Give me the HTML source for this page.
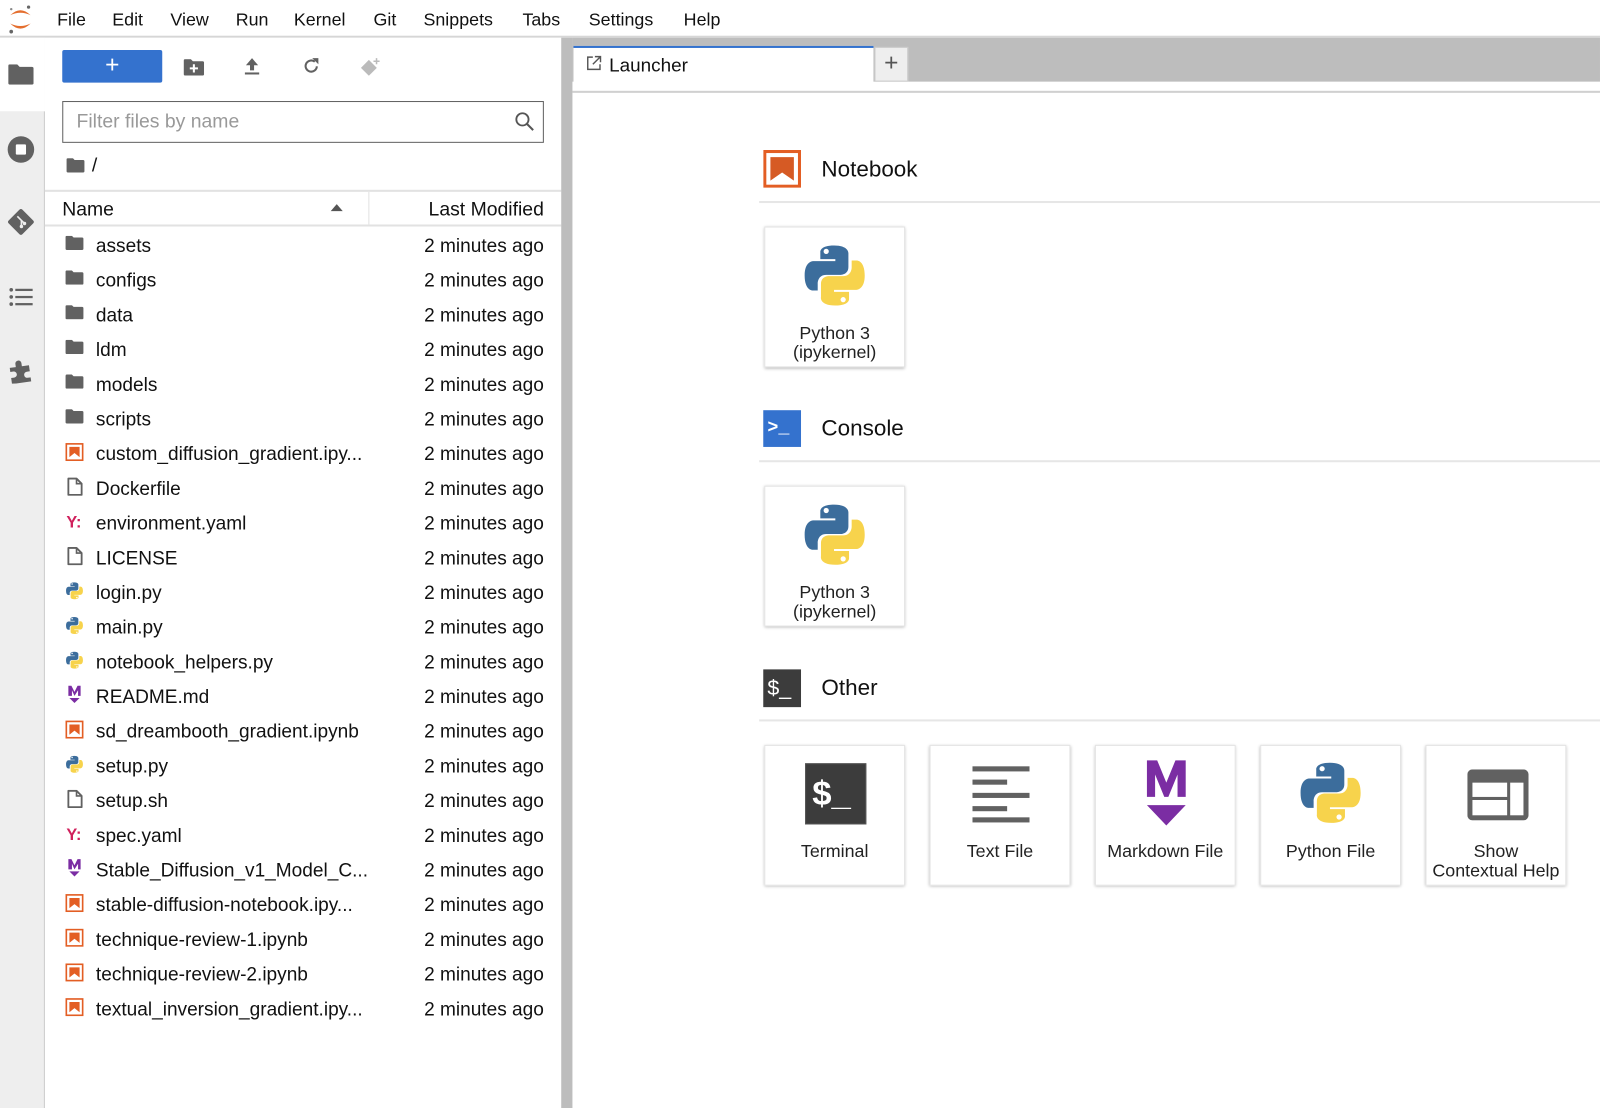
<!DOCTYPE html>
<html><head><meta charset="utf-8">
<style>
*{box-sizing:border-box;margin:0;padding:0}
body{width:1600px;height:1108px;overflow:hidden;background:#fff;font-family:"Liberation Sans",sans-serif;color:#111;position:relative}
#w{position:absolute;left:0;top:0;width:1568px;height:1086px;transform:scale(1.0204);transform-origin:0 0;overflow:hidden}
.abs{position:absolute}
.menu{left:0;top:0;width:1600px;height:37px;border-bottom:2px solid #d6d6d6;background:#fff}
.menu span{position:absolute;top:9px;font-size:17.5px;color:#111}
.side{left:0;top:37px;width:44px;height:1071px;background:#eeeeee;border-right:1px solid #c8c8c8}
.panel{left:44px;top:37px;width:506px;height:1071px;background:#fff}
.split{left:550px;top:37px;width:11px;height:1071px;background:#bdbdbd}
.row{position:absolute;left:44px;width:506px;height:34px;font-size:18.7px}
.row .n{position:absolute;left:50px;top:8px;color:#111;white-space:nowrap}
.row .d{position:absolute;right:17px;top:8px;color:#111}
.row svg{position:absolute;left:20px;top:9px}
.card{position:absolute;width:138px;height:138px;background:#fff;box-shadow:0 1px 3px rgba(0,0,0,.3);border:1px solid #e4e4e4;text-align:center;font-size:17.5px;color:#222;line-height:19px}
.card .lbl{position:absolute;left:0;right:0}
.sec{position:absolute;left:805px;font-size:22px;color:#111}
.hr{position:absolute;left:744px;width:856px;height:2px;background:#e6e6e6}
</style></head><body>
<svg width="0" height="0" style="position:absolute">
<defs>
<symbol id="py" viewBox="0 0 100 100">
<path fill="#3c6d9c" d="M49 4C27 4 28 14 28 14v11h23v3H18S4 27 4 50s12 23 12 23h8V62s0-13 13-13h22s12 0 12-12V16S72 4 49 4z"/>
<circle cx="37" cy="13" r="4" fill="#fff"/>
<path fill="#f7d34c" d="M51 96c22 0 21-10 21-10V75H49v-3h33s14 1 14-22-12-23-12-23h-8v11s0 13-13 13H41s-12 0-12 12v20s-3 13 22 13z"/>
<circle cx="63" cy="87" r="4" fill="#fff"/>
</symbol>
<symbol id="nb" viewBox="0 0 18 18"><rect x="1" y="1" width="16" height="16" fill="#fff" stroke="#e35e24" stroke-width="1.6"/><path d="M4 4h10v10l-5-4-5 4z" fill="#e35e24"/></symbol>
<symbol id="fd" viewBox="0 0 20 16"><path d="M0 1.5Q0 0 1.5 0H7l2 2h9.5Q20 2 20 3.5V14.5Q20 16 18.5 16H1.5Q0 16 0 14.5z" fill="#616161"/></symbol>
<symbol id="fl" viewBox="0 0 18 18"><path d="M3 1h8l5 5v11H3z" fill="#fff" stroke="#616161" stroke-width="1.8" stroke-linejoin="round"/><path d="M11 1v5h5" fill="none" stroke="#616161" stroke-width="1.6"/></symbol>
<symbol id="ym" viewBox="0 0 20 18"><text x="0" y="15" font-family="Liberation Sans" font-weight="bold" font-size="16" fill="#d0205c">Y:</text></symbol>
<symbol id="md" viewBox="0 0 18 20"><path d="M3 1h3l3 6 3-6h3v10h-2.5V5.5L9 11 6.5 5.5V11H3z" fill="#7b2da3"/><path d="M4 13h10l-5 5z" fill="#7b2da3"/></symbol>
</defs></svg>
<div id="w">
<div class="abs menu">
<svg class="abs" style="left:7px;top:4px" width="26" height="30" viewBox="0 0 26 30"><path d="M3 11Q13 1 23 11Q13 6 3 11z" fill="#e46e2e"/><path d="M3 19Q13 29 23 19Q13 24 3 19z" fill="#e46e2e"/><circle cx="21" cy="3" r="1.6" fill="#666"/><circle cx="4" cy="27" r="1.8" fill="#666"/><circle cx="4" cy="5" r="1.2" fill="#888"/></svg>
<span style="left:56px">File</span><span style="left:110px">Edit</span><span style="left:167px">View</span><span style="left:231px">Run</span><span style="left:288px">Kernel</span><span style="left:366px">Git</span><span style="left:415px">Snippets</span><span style="left:512px">Tabs</span><span style="left:577px">Settings</span><span style="left:670px">Help</span>
</div>

<div class="abs side">
<div class="abs" style="left:0;top:0;width:44px;height:72px;background:#fff;border-right:1px solid #fff"></div>
<svg class="abs" style="left:8px;top:26px" width="25" height="20"><use href="#fd"/></svg>
<svg class="abs" style="left:7px;top:96px" width="27" height="27" viewBox="0 0 27 27"><circle cx="13.5" cy="13.5" r="13" fill="#616161"/><rect x="8.5" y="8.5" width="10" height="10" rx="1" fill="#fff"/></svg>
<svg class="abs" style="left:6px;top:166px" width="29" height="29" viewBox="0 0 29 29"><rect x="5" y="5" width="19" height="19" rx="2" transform="rotate(45 14.5 14.5)" fill="#616161"/><path d="M11 9l4 4v6M15 13l3 3" stroke="#eee" stroke-width="1.6" fill="none"/><circle cx="15" cy="19" r="1.7" fill="#eee"/><circle cx="18" cy="16" r="1.7" fill="#eee"/></svg>
<svg class="abs" style="left:9px;top:245px" width="24" height="18" viewBox="0 0 24 18"><g fill="#616161"><circle cx="2" cy="2" r="1.8"/><circle cx="2" cy="9" r="1.8"/><circle cx="2" cy="16" r="1.8"/><rect x="6" y="1" width="17" height="2.2"/><rect x="6" y="8" width="17" height="2.2"/><rect x="6" y="15" width="17" height="2.2"/></g></svg>
<svg class="abs" style="left:8px;top:313px" width="26" height="26" viewBox="0 0 26 26"><path d="M2 9h6V6a3 3 0 016 0v3h7v6h-3a3 3 0 000 6h3v4H2v-6h3a3 3 0 000-6H2z" fill="#616161" transform="rotate(-8 13 13)"/></svg>
</div>

<div class="abs panel">
<div class="abs" style="left:17px;top:12px;width:98px;height:32px;background:#3472ce;border-radius:2px;color:#fff;font-size:24px;text-align:center;line-height:30px">+</div>
<svg class="abs" style="left:136px;top:21px" width="20" height="16"><use href="#fd"/><path d="M10 5v8M6 9h8" stroke="#fff" stroke-width="2"/></svg>
<svg class="abs" style="left:195px;top:19px" width="16" height="18" viewBox="0 0 16 18"><path d="M8 1l6 7H10v5H6V8H2z" fill="#616161"/><rect x="1" y="15" width="14" height="2" fill="#616161"/></svg>
<svg class="abs" style="left:252px;top:19px" width="18" height="18" viewBox="0 0 18 18"><path d="M14.5 9A5.5 5.5 0 1 1 12.5 4.5" fill="none" stroke="#616161" stroke-width="2"/><path d="M10 1h6v6z" fill="#616161"/></svg>
<svg class="abs" style="left:308px;top:18px" width="22" height="22" viewBox="0 0 22 22"><rect x="4" y="6" width="11" height="11" transform="rotate(45 9.5 11.5)" fill="#bbb"/><path d="M17 2v6M14 5h6" stroke="#bbb" stroke-width="1.5"/></svg>
<div class="abs" style="left:17px;top:62px;width:472px;height:41px;border:1px solid #616161;font-size:19px;color:#999;padding:9px 13px">Filter files by name</div>
<svg class="abs" style="left:460px;top:72px" width="20" height="20" viewBox="0 0 20 20"><circle cx="8" cy="8" r="6" fill="none" stroke="#555" stroke-width="1.8"/><path d="M12.5 12.5l6 6" stroke="#555" stroke-width="2"/></svg>
<svg class="abs" style="left:21px;top:118px" width="18" height="14"><use href="#fd"/></svg>
<span class="abs" style="left:46px;top:115px;font-size:19px">/</span>
<div class="abs" style="left:0;top:149px;width:506px;height:36px;border-top:2px solid #e2e2e2;border-bottom:2px solid #e2e2e2"></div>
<div class="abs" style="left:317px;top:151px;width:1px;height:32px;background:#e2e2e2"></div>
<span class="abs" style="left:17px;top:158px;font-size:19px">Name</span>
<svg class="abs" style="left:280px;top:163px" width="12" height="7"><path d="M0 7L6 0l6 7z" fill="#555"/></svg>
<span class="abs" style="right:17px;top:158px;font-size:19px">Last Modified</span>
</div>

<div class="row" style="top:222px"><svg width="18" height="14"><use href="#fd"/></svg><span class="n">assets</span><span class="d">2 minutes ago</span></div>
<div class="row" style="top:256px"><svg width="18" height="14"><use href="#fd"/></svg><span class="n">configs</span><span class="d">2 minutes ago</span></div>
<div class="row" style="top:290px"><svg width="18" height="14"><use href="#fd"/></svg><span class="n">data</span><span class="d">2 minutes ago</span></div>
<div class="row" style="top:324px"><svg width="18" height="14"><use href="#fd"/></svg><span class="n">ldm</span><span class="d">2 minutes ago</span></div>
<div class="row" style="top:358px"><svg width="18" height="14"><use href="#fd"/></svg><span class="n">models</span><span class="d">2 minutes ago</span></div>
<div class="row" style="top:392px"><svg width="18" height="14"><use href="#fd"/></svg><span class="n">scripts</span><span class="d">2 minutes ago</span></div>
<div class="row" style="top:426px"><svg width="18" height="18" style="top:8px"><use href="#nb"/></svg><span class="n">custom_diffusion_gradient.ipy...</span><span class="d">2 minutes ago</span></div>
<div class="row" style="top:460px"><svg width="18" height="18" style="top:8px"><use href="#fl"/></svg><span class="n">Dockerfile</span><span class="d">2 minutes ago</span></div>
<div class="row" style="top:494px"><svg width="20" height="18" style="top:8px;left:21px"><use href="#ym"/></svg><span class="n">environment.yaml</span><span class="d">2 minutes ago</span></div>
<div class="row" style="top:528px"><svg width="18" height="18" style="top:8px"><use href="#fl"/></svg><span class="n">LICENSE</span><span class="d">2 minutes ago</span></div>
<div class="row" style="top:562px"><svg width="18" height="18" style="top:8px"><use href="#py"/></svg><span class="n">login.py</span><span class="d">2 minutes ago</span></div>
<div class="row" style="top:596px"><svg width="18" height="18" style="top:8px"><use href="#py"/></svg><span class="n">main.py</span><span class="d">2 minutes ago</span></div>
<div class="row" style="top:630px"><svg width="18" height="18" style="top:8px"><use href="#py"/></svg><span class="n">notebook_helpers.py</span><span class="d">2 minutes ago</span></div>
<div class="row" style="top:664px"><svg width="18" height="20" style="top:7px"><use href="#md"/></svg><span class="n">README.md</span><span class="d">2 minutes ago</span></div>
<div class="row" style="top:698px"><svg width="18" height="18" style="top:8px"><use href="#nb"/></svg><span class="n">sd_dreambooth_gradient.ipynb</span><span class="d">2 minutes ago</span></div>
<div class="row" style="top:732px"><svg width="18" height="18" style="top:8px"><use href="#py"/></svg><span class="n">setup.py</span><span class="d">2 minutes ago</span></div>
<div class="row" style="top:766px"><svg width="18" height="18" style="top:8px"><use href="#fl"/></svg><span class="n">setup.sh</span><span class="d">2 minutes ago</span></div>
<div class="row" style="top:800px"><svg width="20" height="18" style="top:8px;left:21px"><use href="#ym"/></svg><span class="n">spec.yaml</span><span class="d">2 minutes ago</span></div>
<div class="row" style="top:834px"><svg width="18" height="20" style="top:7px"><use href="#md"/></svg><span class="n">Stable_Diffusion_v1_Model_C...</span><span class="d">2 minutes ago</span></div>
<div class="row" style="top:868px"><svg width="18" height="18" style="top:8px"><use href="#nb"/></svg><span class="n">stable-diffusion-notebook.ipy...</span><span class="d">2 minutes ago</span></div>
<div class="row" style="top:902px"><svg width="18" height="18" style="top:8px"><use href="#nb"/></svg><span class="n">technique-review-1.ipynb</span><span class="d">2 minutes ago</span></div>
<div class="row" style="top:936px"><svg width="18" height="18" style="top:8px"><use href="#nb"/></svg><span class="n">technique-review-2.ipynb</span><span class="d">2 minutes ago</span></div>
<div class="row" style="top:970px"><svg width="18" height="18" style="top:8px"><use href="#nb"/></svg><span class="n">textual_inversion_gradient.ipy...</span><span class="d">2 minutes ago</span></div>

<div class="abs split"></div>

<div class="abs" style="left:561px;top:37px;width:1039px;height:43px;background:#bdbdbd"></div>
<div class="abs" style="left:562px;top:45px;width:294px;height:36px;background:#fff;border-top:2px solid #3472ce"></div>
<svg class="abs" style="left:574px;top:54px" width="16" height="16" viewBox="0 0 16 16"><path d="M7 2H2v12h12V9" fill="none" stroke="#555" stroke-width="1.4"/><path d="M9 1.5h5.5V7M14.5 1.5L7 9" fill="none" stroke="#555" stroke-width="1.4"/></svg>
<span class="abs" style="left:597px;top:53px;font-size:18.5px">Launcher</span>
<div class="abs" style="left:857px;top:46px;width:33px;height:34px;background:#eee;border:1px solid #ccc;font-size:24px;color:#555;text-align:center;line-height:30px">+</div>
<div class="abs" style="left:561px;top:89px;width:1039px;height:2px;background:#d0d0d0"></div>

<svg class="abs" style="left:748px;top:147px" width="37" height="37" viewBox="0 0 37 37"><rect x="1.5" y="1.5" width="34" height="34" fill="#fff" stroke="#e35e24" stroke-width="3"/><path d="M7 7h23v23l-11.5-8L7 30z" fill="#d65a24"/></svg>
<span class="sec" style="top:153px">Notebook</span>
<div class="hr" style="top:197px"></div>
<div class="card" style="left:749px;top:222px"><svg class="abs" style="left:36px;top:15px" width="64" height="64"><use href="#py"/></svg><div class="lbl" style="top:94px">Python 3<br>(ipykernel)</div></div>

<div class="abs" style="left:748px;top:402px;width:37px;height:36px;background:#3472ce;color:#fff;font-weight:bold;font-size:18px;padding:8px 0 0 4px;font-family:'Liberation Mono',monospace">&gt;_</div>
<span class="sec" style="top:407px">Console</span>
<div class="hr" style="top:451px"></div>
<div class="card" style="left:749px;top:476px"><svg class="abs" style="left:36px;top:15px" width="64" height="64"><use href="#py"/></svg><div class="lbl" style="top:94px">Python 3<br>(ipykernel)</div></div>

<div class="abs" style="left:748px;top:656px;width:37px;height:37px;background:#3c3c3c;color:#fff;font-size:21px;padding:7px 0 0 4px">$_</div>
<span class="sec" style="top:661px">Other</span>
<div class="hr" style="top:705px"></div>

<div class="card" style="left:749px;top:730px"><div class="abs" style="left:39px;top:17px;width:60px;height:60px;background:#3c3c3c;border:1px solid #555;color:#fff;font-size:34px;font-weight:bold;line-height:58px;text-align:left;padding-left:6px">$_</div><div class="lbl" style="top:94px">Terminal</div></div>
<div class="card" style="left:911px;top:730px"><svg class="abs" style="left:41px;top:19px" width="56" height="56" viewBox="0 0 56 56"><g fill="#616161"><rect x="0" y="1" width="56" height="5"/><rect x="0" y="14" width="34" height="5"/><rect x="0" y="27" width="56" height="5"/><rect x="0" y="40" width="34" height="5"/><rect x="0" y="51" width="56" height="5"/></g></svg><div class="lbl" style="top:94px">Text File</div></div>
<div class="card" style="left:1073px;top:730px"><svg class="abs" style="left:47px;top:14px" width="44" height="66" viewBox="0 0 44 66"><path d="M3 0h10l9 22 9-22h10v36h-8V14l-9 22h-4l-9-22v22H3z" fill="#7b2da3"/><path d="M3 44h38L22 64z" fill="#7b2da3"/></svg><div class="lbl" style="top:94px">Markdown File</div></div>
<div class="card" style="left:1235px;top:730px"><svg class="abs" style="left:36px;top:14px" width="64" height="64"><use href="#py"/></svg><div class="lbl" style="top:94px">Python File</div></div>
<div class="card" style="left:1397px;top:730px"><svg class="abs" style="left:40px;top:23px" width="60" height="50" viewBox="0 0 60 50"><rect x="0" y="0" width="60" height="50" rx="5" fill="#616161"/><rect x="5" y="13" width="34" height="14" fill="#fff"/><rect x="5" y="30" width="34" height="15" fill="#fff"/><rect x="42" y="13" width="13" height="32" fill="#fff"/></svg><div class="lbl" style="top:94px">Show<br>Contextual Help</div></div>
</div>
</body></html>
